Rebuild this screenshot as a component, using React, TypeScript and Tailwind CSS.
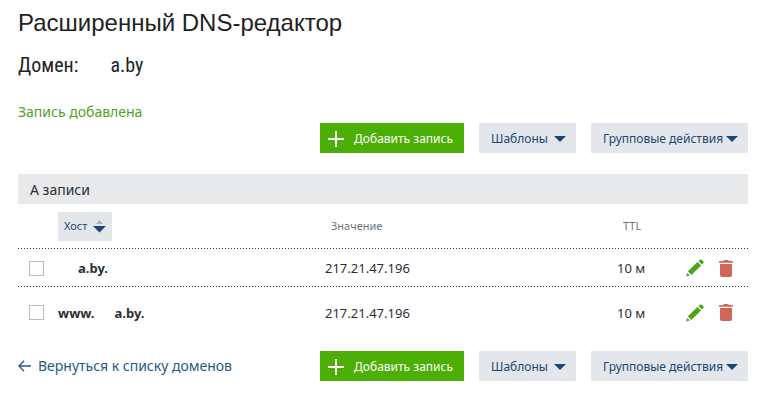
import { useState } from 'react'

type DnsRecord = { id: number; prefix: string; host: string; value: string; ttl: string }

const records: DnsRecord[] = [
  { id: 1, prefix: '', host: 'a.by.', value: '217.21.47.196', ttl: '10 м' },
  { id: 2, prefix: 'www.', host: 'a.by.', value: '217.21.47.196', ttl: '10 м' },
]

// one-pixel dots, wider apart than a CSS dotted border draws them
const dottedLine =
  'bg-[repeating-linear-gradient(90deg,#333_0_1px,transparent_1px_3px)] bg-[length:100%_1px] bg-bottom bg-no-repeat'

function CaretDown() {
  return (
    <svg width="12" height="6" viewBox="0 0 12 6" aria-hidden="true">
      <path d="M0 0h12L6 6z" fill="#1b4772" />
    </svg>
  )
}

function SortIcon() {
  return (
    <svg width="13" height="14" viewBox="0 0 13 14" aria-hidden="true">
      <path d="M3 4L6.5 0 10 4z" fill="#a9b0b6" />
      <path d="M0 6h13L6.5 12.5z" fill="#1b4772" />
    </svg>
  )
}

function PencilIcon() {
  return (
    <svg width="18" height="18" viewBox="0 0 18 18" aria-hidden="true">
      <path d="M0 17.5l1.2-3.8 2.7 2.7z" fill="#6f9a3c" />
      <path d="M1.8 12.3L11.5 3l3.6 3.6-9.7 9.3z" fill="#4fa51a" />
      <path d="M12.5 2.2L14 .8q.9-.8 1.8 0l1.500 1.500q.8.9 0 1.800L15.900 5.500z" fill="#4fa51a" />
    </svg>
  )
}

function TrashIcon() {
  return (
    <svg width="14" height="17" viewBox="0 0 14 17" aria-hidden="true">
      <path d="M0 1.2L4.4.8Q4.6 0 5.4 0h3.2q.8 0 1 .8l4.4.4v1.6H0z" fill="#d0655b" />
      <path d="M1 4h12v11q0 2-2 2H3q-2 0-2-2z" fill="#d0655b" />
    </svg>
  )
}

function Toolbar() {
  return (
    <div className="flex gap-[15px] text-xs">
      <button className="flex h-[30px] w-36 items-center bg-[#4caf05] pt-px pr-[11px] pl-2 text-white">
        <svg width="16" height="16" viewBox="0 0 16 16" aria-hidden="true">
          <path d="M8 0v16M0 8h16" stroke="currentColor" strokeWidth="2" />
        </svg>
        <span className="flex-1 text-right whitespace-nowrap">Добавить запись</span>
      </button>
      <button className="flex h-[30px] w-[97px] items-center justify-between bg-[#e3e7eb] pt-px pr-[10px] pl-3 text-[#1b4772]">
        Шаблоны
        <CaretDown />
      </button>
      <button className="flex h-[30px] w-[157px] items-center justify-between bg-[#e3e7eb] pt-px pr-[10px] pl-3 whitespace-nowrap text-[#1b4772]">
        Групповые действия
        <CaretDown />
      </button>
    </div>
  )
}

export default function App() {
  const [selected, setSelected] = useState<number[]>([])

  function toggle(id: number) {
    setSelected((prev) => (prev.includes(id) ? prev.filter((v) => v !== id) : [...prev, id]))
  }

  return (
    <main className="min-h-screen bg-white pt-2 pr-[26px] pb-8 pl-[18px] font-['Noto_Sans','Open_Sans',sans-serif] text-[#2b2f33]">
      <h1 className="font-['Liberation_Sans',Arial,sans-serif] text-2xl leading-[30px] text-[#222]">
        Расширенный DNS-редактор
      </h1>
      <h2 className="mt-3 flex gap-8 font-['Roboto_Condensed','Open_Sans_Condensed',sans-serif] text-xl leading-[30px] font-normal text-[#222]">
        <span>Домен:</span>
        <span>a.by</span>
      </h2>
      <p className="mt-[21px] text-sm leading-[22px] text-[#55a028]">Запись добавлена</p>
      <div className="flex justify-end">
        <Toolbar />
      </div>

      <h3 className="mt-[21px] bg-[#e8e9ea] px-3 pt-0.5 text-sm leading-7">А записи</h3>
      <table className="w-full table-fixed text-left text-[13px]">
        <thead>
          <tr className={`h-[45px] text-[11px] text-[#6c757b] ${dottedLine}`}>
            <th className="w-10" />
            <th className="font-normal">
              <button className="flex h-[29px] w-[54px] items-center justify-between bg-[#e3e7eb] px-[6px] text-[#1b4772]">
                Хост
                <SortIcon />
              </button>
            </th>
            <th className="w-[292px] pl-[6px] font-normal">Значение</th>
            <th className="w-[69px] pl-[6px] font-normal">TTL</th>
            <th className="w-[62px]" />
          </tr>
        </thead>
        <tbody>
          {records.map((record) => (
            <tr key={record.id} className={`h-[38px] last:h-[51px] last:bg-none ${dottedLine}`}>
              <td className="pl-[11px]">
                <input
                  type="checkbox"
                  aria-label={`${record.prefix}${record.host}`}
                  checked={selected.includes(record.id)}
                  onChange={() => toggle(record.id)}
                  className="block size-[15px] appearance-none border border-[#b4bfc2] bg-white checked:bg-[#4caf05]"
                />
              </td>
              <td className="pt-0.5 font-bold">
                <span className="mr-5">{record.prefix}</span>
                {record.host}
              </td>
              <td className="pt-0.5">{record.value}</td>
              <td className="pt-0.5">{record.ttl}</td>
              <td>
                <div className="flex items-center gap-[15px]">
                  <button aria-label="Изменить">
                    <PencilIcon />
                  </button>
                  <button aria-label="Удалить">
                    <TrashIcon />
                  </button>
                </div>
              </td>
            </tr>
          ))}
        </tbody>
      </table>

      <div className="mt-[13px] flex items-center justify-between">
        <a href="#domains" className="flex items-center gap-[7px] text-sm text-[#27598a]">
          <svg width="13" height="12" viewBox="0 0 13 12" fill="none" stroke="currentColor" strokeWidth="1.3" aria-hidden="true">
            <path d="M6 .7L1 6l5 5.3M1 6h12" />
          </svg>
          Вернуться к списку доменов
        </a>
        <Toolbar />
      </div>
    </main>
  )
}
